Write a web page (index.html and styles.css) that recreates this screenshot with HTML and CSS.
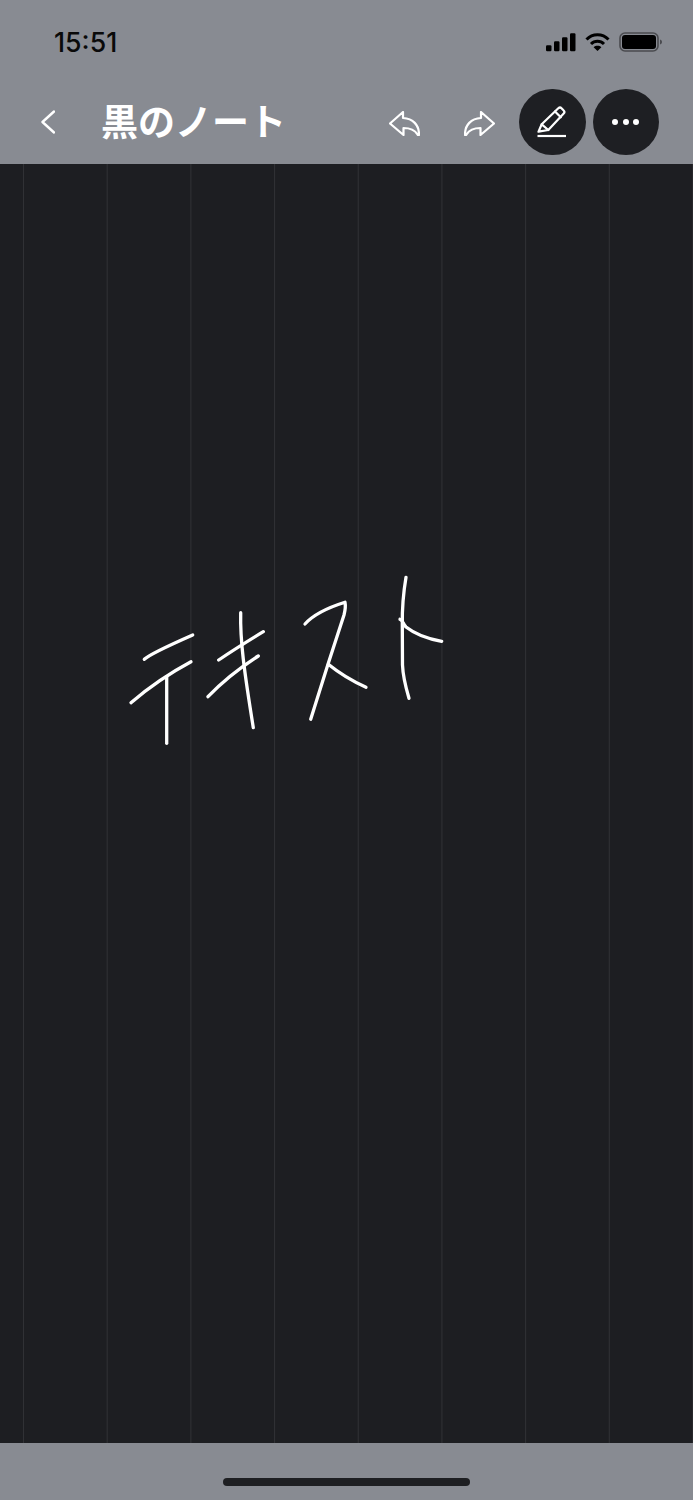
FILE: index.html
```html
<!DOCTYPE html>
<html lang="ja">
<head>
<meta charset="utf-8">
<title>黒のノート</title>
<link rel="stylesheet" href="styles.css">
</head>
<body>
<div class="app">
  <header class="top">
    <div class="status">
      <span class="time">15:51</span>
      <div class="status-icons">
        <svg class="signal" viewBox="0 0 30 18" fill="#000"><rect x="0" y="12" width="5.500" height="6" rx="1.200"/><rect x="8" y="8" width="5.500" height="10" rx="1.200"/><rect x="16" y="4" width="5.500" height="14" rx="1.200"/><rect x="24" y="0" width="5.500" height="18" rx="1.200"/></svg>
        <svg class="wifi" viewBox="0 0 25 19" fill="none" stroke="#000" stroke-width="3"><path d="M1.500 7.500C7.500 1.200 17.500 1.200 23.500 7.500"/><path d="M6 12C9.600 8.400 15.400 8.400 19 12"/><path d="M12.500 19L8.600 15.200C10.800 13.300 14.200 13.300 16.400 15.200Z" fill="#000" stroke="none"/></svg>
        <svg class="battery" viewBox="0 0 44 20"><rect x="1" y="1" width="38" height="18" rx="5" fill="none" stroke="#4a4b4f" stroke-width="1.600"/><rect x="3" y="3" width="34" height="14" rx="3" fill="#000"/><path d="M41 7.500C42.500 8 43 9 43 10C43 11 42.500 12 41 12.500Z" fill="#4a4b4f"/></svg>
      </div>
    </div>
    <nav class="nav">
      <svg class="back" viewBox="0 0 14 24" fill="none" stroke="#fff" stroke-width="2.400" stroke-linecap="round" stroke-linejoin="round"><path d="M13 1.500L1.500 12L13 22.500"/></svg>
      <h1 class="title">黒のノート</h1>
      <svg class="arrow" viewBox="0 0 31 25" fill="none" stroke="#fff" stroke-width="2.200" stroke-linejoin="round"><path d="M1 12.500L14 1V7C24 7.500 30 14 30 23.500C30 24.500 29 24.500 28.500 23.500C25.500 18.500 21 17 14.500 17V24Z"/></svg>
      <svg class="arrow redo" viewBox="0 0 31 25" fill="none" stroke="#fff" stroke-width="2.200" stroke-linejoin="round"><path d="M1 12.500L14 1V7C24 7.500 30 14 30 23.500C30 24.500 29 24.500 28.500 23.500C25.500 18.500 21 17 14.500 17V24Z"/></svg>
      <button class="round pen-btn" aria-label="ペン">
        <svg viewBox="0 0 66 66" fill="none" stroke="#fff" stroke-width="2.200" stroke-linejoin="round" stroke-linecap="round"><path d="M19.500 42.700L22.700 35.300L39.300 19.300C40.500 18.200 41.500 18.200 42.500 19.200L44.700 21.500C45.700 22.500 45.700 23.500 44.700 24.500L29.300 41Z"/><path d="M36 22.500L41.800 28.300"/><path d="M22.700 35.300L29.300 41"/><path d="M18.500 47H47" stroke-width="2.200" stroke-linecap="butt"/></svg>
      </button>
      <button class="round more-btn" aria-label="その他">
        <span class="dot"></span><span class="dot"></span><span class="dot"></span>
      </button>
    </nav>
  </header>
  <main class="canvas">
    <svg class="ink" viewBox="0 164 693 1279" fill="none" stroke="#fff" stroke-width="3.300" stroke-linecap="round" stroke-linejoin="round">
      <path d="M144.300 659.300C150 654 170 645 192.700 635"/>
      <path d="M131 702.700C148 688 168 674 191 661.700"/>
      <path d="M166.700 676.700V743.300"/>
      <path d="M218.700 660C232 651 248 641 263.300 631.700"/>
      <path d="M208 696.700C222 682 238 669 258.300 656"/>
      <path d="M240.700 612.700C240 640 244 670 253.300 727.700"/>
      <path d="M305 624C315 613 330 607 345 602.300C346 607 345 611 344 615L328.300 663.300L310.700 719.300"/>
      <path d="M328.300 664.300C339 673 352 681 366 687.300"/>
      <path d="M406 577.300C403 595 402 605 402.300 625L402.500 665C403 678 406 688 409 698.300"/>
      <path d="M400 619.300C403 620 403 624 406 627C415 634 428 639 441.700 641.300"/>
    </svg>
  </main>
  <footer class="bottom"><span class="home"></span></footer>
</div>
</body>
</html>
```
FILE: styles.css
```css
* { box-sizing: border-box; }
html, body { margin: 0; padding: 0; }
body { background: #888b92; }
.app { width: 693px; height: 1500px; display: flex; flex-direction: column; overflow: hidden; }
.top { height: 164px; background: #888b92; flex: none; }
.status { height: 84px; padding: 32px 30px 0 54px; display: flex; justify-content: space-between; align-items: flex-start; }
.time { font: 500 26.700px/20px Inter, "Liberation Sans", sans-serif; color: #0a0a0a; }
.status-icons { display: flex; align-items: flex-start; }
.signal { width: 30px; height: 18.500px; margin-top: 1px; display: block; }
.wifi { width: 25px; height: 19px; margin-left: 9.500px; display: block; }
.battery { width: 44px; height: 20px; margin-left: 9px; display: block; }
.nav { height: 80px; display: flex; align-items: center; padding: 0 34px 4px 41px; }
.back { width: 14px; height: 24px; flex: none; }
.title { margin: -4px 0 0 46px; flex: 1; font: 700 37px/46px "Noto Sans CJK JP", sans-serif; color: #fff; white-space: nowrap; }
.arrow { width: 31px; height: 25px; flex: none; margin-top: 2px; }
.redo { transform: scaleX(-1); margin-left: 44px; }
.round { width: 66.500px; height: 66.500px; flex: none; border: 0; padding: 0; border-radius: 50%; background: #1e1f23; display: flex; align-items: center; justify-content: center; }
.round svg { width: 66px; height: 66px; display: block; }
.pen-btn { margin-left: 24px; }
.more-btn { margin-left: 7px; gap: 4.500px; }
.dot { width: 6px; height: 6px; border-radius: 50%; background: #fff; }
.canvas { flex: 1; position: relative; background-color: #1d1e22; background-image: linear-gradient(to right, #303135 1.200px, transparent 1.200px); background-size: 83.700px 100%; background-position: 23px 0; }
.ink { position: absolute; inset: 0; width: 100%; height: 100%; display: block; }
.bottom { height: 57px; flex: none; background: #888b92; display: flex; justify-content: center; padding-top: 35px; }
.home { width: 247px; height: 8px; border-radius: 4px; background: #1e1f22; }
```
